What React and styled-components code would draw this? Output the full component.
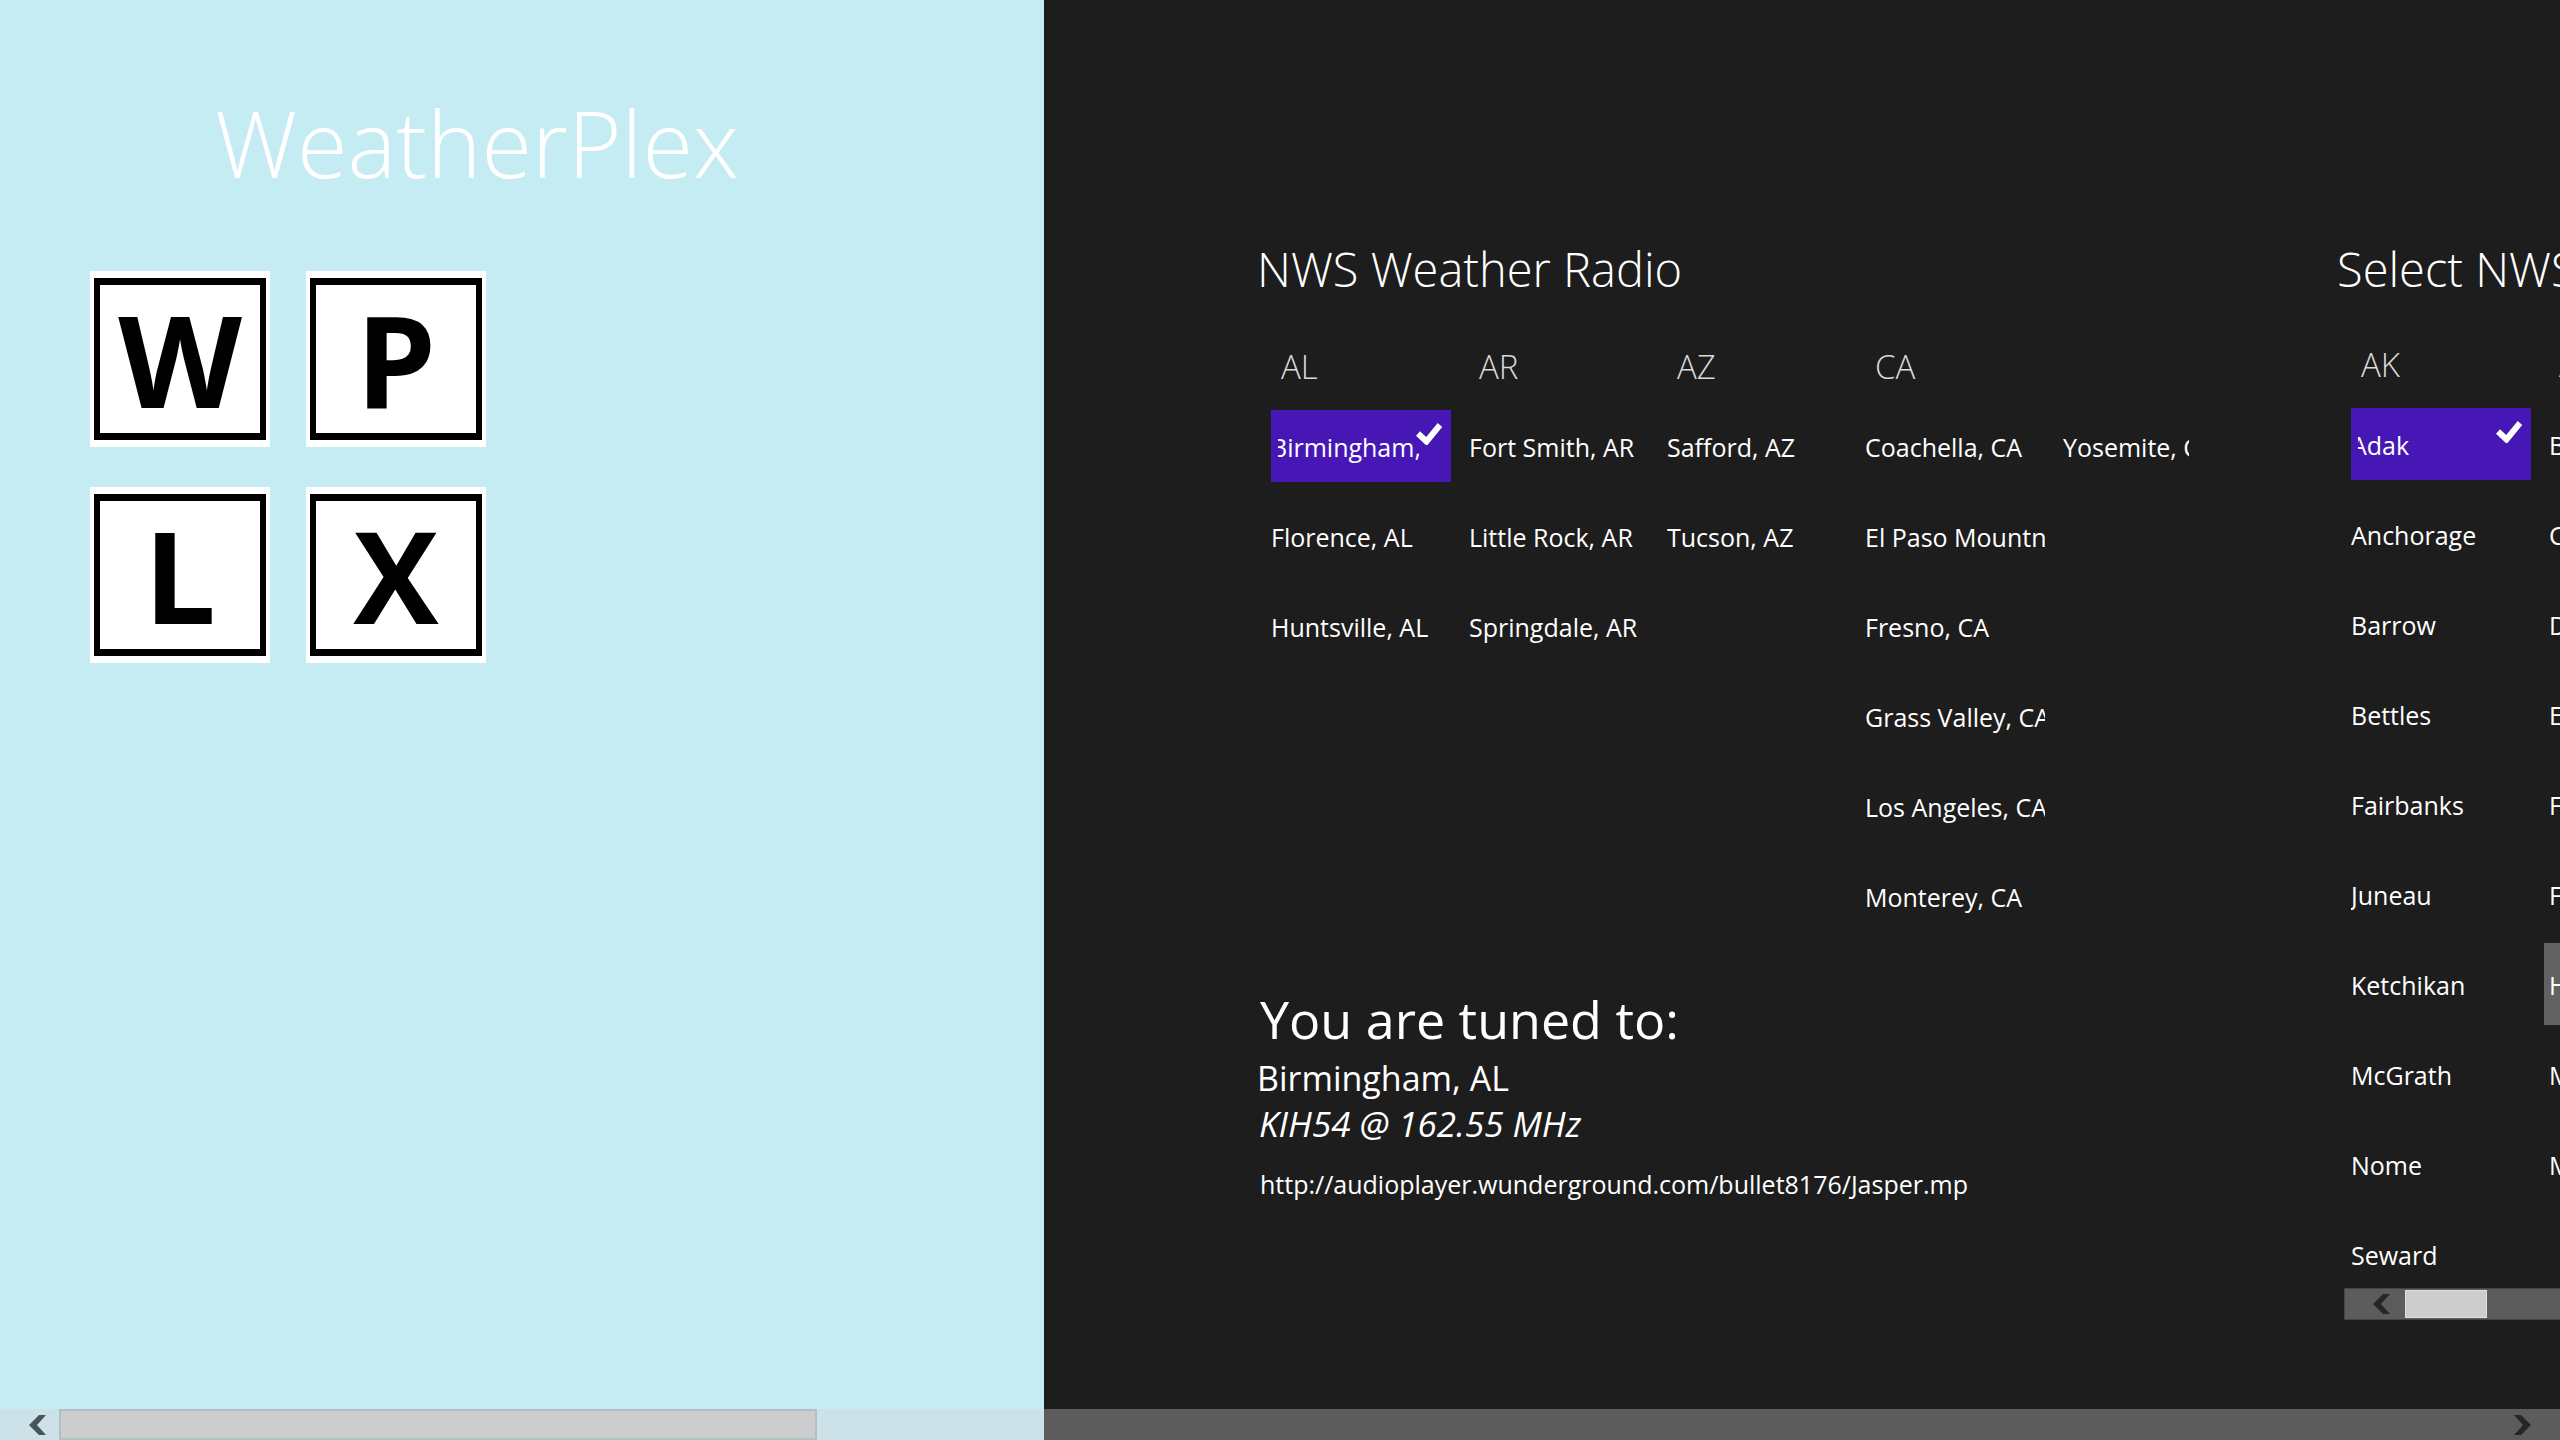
import styled, { createGlobalStyle } from 'styled-components';

const tiles = ['W', 'P', 'L', 'X'];

const radioGroups = [
  { name: 'AL', stations: ['Birmingham, AL', 'Florence, AL', 'Huntsville, AL'] },
  { name: 'AR', stations: ['Fort Smith, AR', 'Little Rock, AR', 'Springdale, AR'] },
  { name: 'AZ', stations: ['Safford, AZ', 'Tucson, AZ'] },
  {
    name: 'CA',
    stations: [
      'Coachella, CA',
      'El Paso Mountn',
      'Fresno, CA',
      'Grass Valley, CA',
      'Los Angeles, CA',
      'Monterey, CA',
      'Yosemite, CA',
    ],
  },
];

const officeGroups = [
  {
    name: 'AK',
    stations: [
      'Adak',
      'Anchorage',
      'Barrow',
      'Bettles',
      'Fairbanks',
      'Juneau',
      'Ketchikan',
      'McGrath',
      'Nome',
      'Seward',
    ],
  },
  { name: 'AL', stations: ['B', 'C', 'D', 'E', 'F', 'F', 'H', 'M', 'M'] },
];

export default function App() {
  return (
    <>
      <GlobalStyle />
      <Page>
        <Sidebar>
          <AppTitle>WeatherPlex</AppTitle>
          <TileGrid>
            {tiles.map(letter => (
              <Tile key={letter}>
                <TileFace>{letter}</TileFace>
              </Tile>
            ))}
          </TileGrid>
        </Sidebar>
        <Hub>
          <Section>
            <SectionTitle>NWS Weather Radio</SectionTitle>
            <RadioList>
              <StationList groups={radioGroups} rows={6} selected="Birmingham, AL" />
            </RadioList>
            <Tuned>
              <TunedTitle>You are tuned to:</TunedTitle>
              <TunedCity>Birmingham, AL</TunedCity>
              <TunedSignal>KIH54 @ 162.55 MHz</TunedSignal>
              <TunedUrl>http://audioplayer.wunderground.com/bullet8176/Jasper.mp</TunedUrl>
            </Tuned>
          </Section>
          <Section>
            <SectionTitle>Select NWS</SectionTitle>
            <OfficeList>
              <StationList groups={officeGroups} rows={10} selected="Adak" hovered="H" />
            </OfficeList>
            <ListScroll>
              <ScrollButton aria-label="Scroll left">
                <Chevron />
              </ScrollButton>
              <ListThumb />
            </ListScroll>
          </Section>
        </Hub>
        <PageScroll>
          <ScrollButton aria-label="Scroll left">
            <Chevron />
          </ScrollButton>
          <PageThumb />
          <ScrollButton aria-label="Scroll right">
            <Chevron right />
          </ScrollButton>
        </PageScroll>
      </Page>
    </>
  );
}

function StationList({ groups, rows, selected, hovered }) {
  return groups.map(group => (
    <Group key={group.name}>
      <GroupName>{group.name}</GroupName>
      <Stations $rows={rows}>
        {group.stations.map((station, index) => (
          <Station
            key={index}
            aria-pressed={station === selected}
            $selected={station === selected}
            $hovered={station === hovered}
          >
            <StationName>{station}</StationName>
            {station === selected && <Check />}
          </Station>
        ))}
      </Stations>
    </Group>
  ));
}

function Check() {
  return (
    <CheckIcon viewBox="0 0 26 23">
      <path d="M2 11.5 L10.5 19.5 L24 3" fill="none" stroke="#fff" strokeWidth="6" />
    </CheckIcon>
  );
}

function Chevron({ right }) {
  return (
    <ChevronIcon viewBox="0 0 17 20">
      <path d={right ? 'M0 0H7L17 10L7 20H0L9 10Z' : 'M17 0H10L0 10L10 20H17L8 10Z'} />
    </ChevronIcon>
  );
}

const GlobalStyle = createGlobalStyle`
  * {
    box-sizing: border-box;
  }
  body {
    margin: 0;
    background: #1d1d1d;
    color: #fff;
    font-family: 'Open Sans', 'Noto Sans', sans-serif;
    overflow: hidden;
  }
  h1, h2, h3, p {
    margin: 0;
  }
  button {
    border: 0;
    padding: 0;
    background: none;
    color: inherit;
    font: inherit;
  }
`;
const Page = styled.div`
  display: flex;
  position: relative;
  min-height: 100vh;
  overflow: hidden;
`;
const Sidebar = styled.aside`
  flex: 0 0 1044px;
  padding: 76px 90px 0;
  background: #c5ecf3;
`;
const AppTitle = styled.h1`
  padding-left: 125px;
  font-size: 92px;
  font-weight: 300;
  line-height: 134px;
`;
const TileGrid = styled.div`
  display: grid;
  grid-template-columns: repeat(2, 180px);
  gap: 40px 36px;
  margin-top: 61px;
`;
const Tile = styled.div`
  height: 176px;
  padding: 7px 4px;
  background: #fff;
`;
const TileFace = styled.div`
  display: flex;
  align-items: center;
  justify-content: center;
  height: 100%;
  border: solid #000;
  border-width: 7px 6px;
  color: #000;
  font-size: 128px;
  font-weight: 700;
  line-height: 1;
`;

const Hub = styled.main`
  display: flex;
  flex: 1;
  gap: 148px;
  min-width: 0;
  padding: 238px 0 0 213px;
  overflow: hidden;
`;
const Section = styled.section`
  flex: 0 0 932px;
  min-width: 0;
`;
const SectionTitle = styled.h2`
  height: 64px;
  font-size: 47px;
  font-weight: 350;
  line-height: 62px;
  white-space: nowrap;
`;
const List = styled.div`
  display: flex;
  gap: 18px;
  padding-left: 14px;
  overflow: hidden;
`;
const RadioList = styled(List)`
  height: 640px;
  padding-top: 40px;
`;
const OfficeList = styled(List)`
  height: 986px;
  padding-top: 38px;
`;
const Group = styled.div`
  flex: none;
`;
const GroupName = styled.h3`
  height: 68px;
  padding-left: 10px;
  color: #dadada;
  font-size: 33px;
  font-weight: 300;
  line-height: 50px;
`;
const Stations = styled.div`
  display: grid;
  grid-template-rows: repeat(${({ $rows }) => $rows}, 72px);
  grid-auto-flow: column;
  grid-auto-columns: 180px;
  gap: 18px;
`;
const Station = styled.button`
  position: relative;
  padding-top: 2px;
  padding-left: ${({ $selected }) => ($selected ? '7px' : '0')};
  padding-right: ${({ $selected }) => ($selected ? '32px' : '0')};
  background: ${({ $selected, $hovered }) => ($selected ? '#4617b4' : $hovered ? '#626262' : 'none')};
  box-shadow: ${({ $hovered }) => ($hovered ? '0 0 0 5px #626262' : 'none')};
  font-size: 25px;
  line-height: 36px;
  text-align: left;

  span {
    text-indent: ${({ $selected }) => ($selected ? '-7px' : '0')};
  }
`;
const StationName = styled.span`
  display: block;
  overflow: hidden;
  white-space: nowrap;
`;
const CheckIcon = styled.svg`
  position: absolute;
  top: 12px;
  right: 9px;
  width: 26px;
  height: 23px;
`;

const Tuned = styled.div`
  padding-top: 40px;
`;
const TunedTitle = styled.h2`
  padding-left: 3px;
  font-size: 52px;
  font-weight: 400;
  line-height: 74px;
`;
const TunedCity = styled.p`
  font-size: 34px;
  line-height: 45px;
`;
const TunedSignal = styled.p`
  padding-left: 2px;
  font-size: 35px;
  font-style: italic;
  line-height: 45px;
`;
const TunedUrl = styled.p`
  padding: 16px 0 0 3px;
  font-size: 25px;
  line-height: 45px;
`;

const ScrollBar = styled.div`
  display: flex;
  align-items: center;
`;
const ListScroll = styled(ScrollBar)`
  height: 32px;
  margin-left: 7px;
  padding-left: 28px;
  border: 1px solid #454545;
  background: #5c5c5c;
  color: #262626;
`;
const PageScroll = styled(ScrollBar)`
  position: absolute;
  right: 0;
  bottom: 0;
  left: 0;
  height: 31px;
  padding: 0 29px;
  background: linear-gradient(90deg, #cce1e8 1044px, #5c5c5c 1044px);
  color: #262626;
`;
const ScrollButton = styled.button`
  display: flex;

  &:first-child {
    margin-right: 13px;
    color: #4a5457;
  }
  ${ListScroll} &:first-child {
    margin-right: 15px;
    color: #262626;
  }
`;
const ListThumb = styled.div`
  width: 82px;
  height: 28px;
  border: 1px solid #e0e0e0;
  background: #cdcdcd;
`;
const PageThumb = styled.div`
  width: 758px;
  height: 31px;
  margin-right: auto;
  border: 2px solid #b0c0c7;
  background: #cdcdcd;
`;
const ChevronIcon = styled.svg`
  width: 17px;
  height: 20px;
  fill: currentColor;
`;
